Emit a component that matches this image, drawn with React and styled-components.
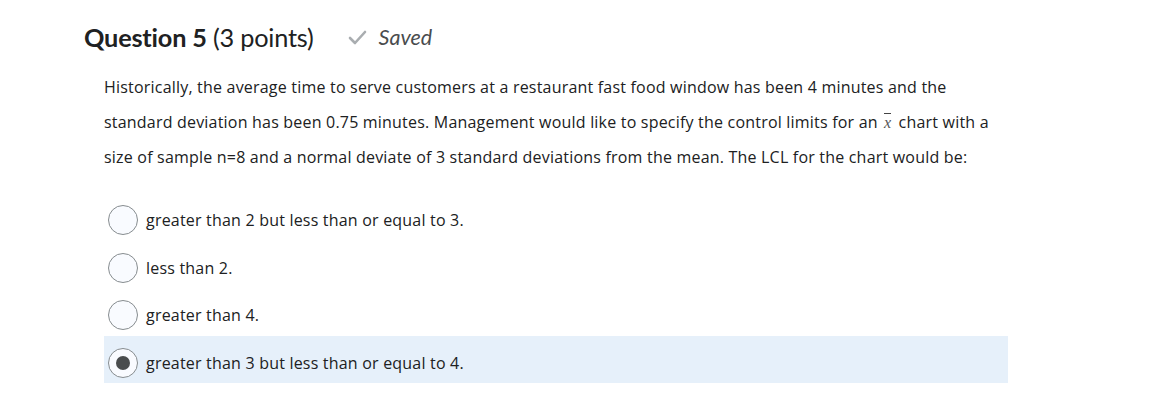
import React from "react";
import styled, { createGlobalStyle } from "styled-components";

const Global = createGlobalStyle`
  html, body { margin: 0; padding: 0; background: #ffffff; }
  body { font-family: "Open Sans", Lato, sans-serif; color: #202122; }
`;

const Page = styled.div`
  width: 1156px;
  height: 400px;
  box-sizing: border-box;
  padding: 20px 0 0 84px;
`;

const Header = styled.div`
  display: flex;
  align-items: center;
  height: 34px;
`;

const Title = styled.h2`
  margin: 0;
  font-family: Lato, sans-serif;
  font-size: 25.3px;
  font-weight: 400;
  color: #202122;
  letter-spacing: -0.2px;
  strong { font-weight: 700; }
`;

const SavedTag = styled.span`
  display: flex;
  align-items: center;
  gap: 12px;
  margin-left: 34px;
  font-family: Lato, sans-serif;
  font-style: italic;
  font-size: 21.5px;
  color: #494c4e;
`;

const Body = styled.div`
  padding: 16px 0 0 20px;
`;

const Paragraph = styled.p`
  margin: 0;
  width: 940px;
  font-family: "Open Sans", sans-serif;
  font-size: 16px;
  letter-spacing: 0.2px;
  line-height: 35px;
  color: #202122;
`;

const XBar = styled.span`
  display: inline-block;
  margin: 0 3px 0 2px;
  padding-top: 2px;
  border-top: 1.5px solid #444;
  line-height: 14px;
  font-family: "Liberation Serif", serif;
  font-style: italic;
  font-size: 16px;
  letter-spacing: 0;
  color: #555;
`;

const Options = styled.div`
  display: flex;
  flex-direction: column;
  margin-top: 18px;
  width: 904px;
`;

const Option = styled.label`
  box-sizing: border-box;
  display: flex;
  align-items: center;
  gap: 8px;
  height: 47.5px;
  padding: 7px 0 0 4px;
  background: ${(p) => (p.$selected ? "#e6f0fa" : "transparent")};
  font-family: "Open Sans", sans-serif;
  font-size: 16px;
  letter-spacing: 0.2px;
  color: #202122;
`;

const Radio = styled.span`
  box-sizing: border-box;
  width: 30px;
  height: 30px;
  border-radius: 50%;
  border: 1px solid #868c8f;
  background: #f9fbff;
  display: flex;
  align-items: center;
  justify-content: center;
  flex: none;
  &::after {
    content: "";
    display: ${(p) => (p.$checked ? "block" : "none")};
    width: 14px;
    height: 14px;
    border-radius: 50%;
    background: #494c4e;
  }
`;

const options = [
  "greater than 2 but less than or equal to 3.",
  "less than 2.",
  "greater than 4.",
  "greater than 3 but less than or equal to 4.",
];

export default function App() {
  return (
    <>
      <Global />
      <Page>
        <Header>
          <Title>
            <strong>Question 5</strong> (3 points)
          </Title>
          <SavedTag>
            <svg width="19" height="15" viewBox="0 0 19 15">
              <path d="M2 8 L7 13 L17 2" fill="none" stroke="#a9adb0" strokeWidth="2.6" strokeLinecap="round" strokeLinejoin="round" />
            </svg>
            Saved
          </SavedTag>
        </Header>
        <Body>
          <Paragraph>
            Historically, the average time to serve customers at a restaurant fast food window has been 4 minutes and the
            <br />
            standard deviation has been 0.75 minutes. Management would like to specify the control limits for an <XBar>x</XBar> chart with a
            <br />
            size of sample n=8 and a normal deviate of 3 standard deviations from the mean. The LCL for the chart would be:
          </Paragraph>
          <Options>
            {options.map((o, i) => (
              <Option key={i} $selected={i === 3}>
                <Radio $checked={i === 3} />
                {o}
              </Option>
            ))}
          </Options>
        </Body>
      </Page>
    </>
  );
}
